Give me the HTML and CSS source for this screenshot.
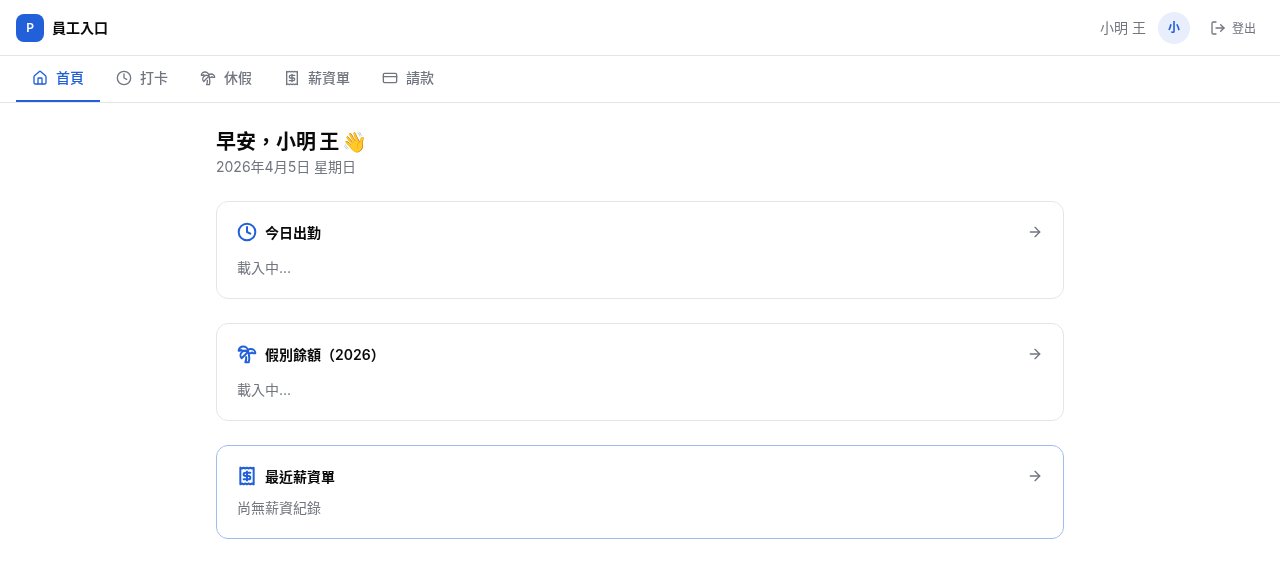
FILE: index.html
```html
<!DOCTYPE html>
<html lang="zh-Hant">

<head>
	<meta charset="UTF-8">
	<meta name="viewport" content="width=device-width, initial-scale=1.0">
	<title>員工入口</title>
	<link rel="stylesheet" href="styles.css">
</head>

<body>
	<div class="page">
		<header class="topbar">
			<div class="brand">
				<div class="brand-logo">P</div>
				<span class="brand-name">員工入口</span>
			</div>
			<div class="user">
				<span class="user-name">小明 王</span>
				<div class="avatar">小</div>
				<button class="logout">
					<svg class="icon" viewBox="0 0 24 24"><path d="m16 17 5-5-5-5"/><path d="M21 12H9"/><path d="M9 21H5a2 2 0 0 1-2-2V5a2 2 0 0 1 2-2h4"/></svg>
					登出
				</button>
			</div>
		</header>

		<nav class="tabs">
			<a class="tab active">
				<svg class="icon" viewBox="0 0 24 24"><path d="M15 21v-8a1 1 0 0 0-1-1h-4a1 1 0 0 0-1 1v8"/><path d="M3 10a2 2 0 0 1 .709-1.528l7-5.999a2 2 0 0 1 2.582 0l7 5.999A2 2 0 0 1 21 10v9a2 2 0 0 1-2 2H5a2 2 0 0 1-2-2z"/></svg>
				首頁
			</a>
			<a class="tab">
				<svg class="icon" viewBox="0 0 24 24"><circle cx="12" cy="12" r="10"/><polyline points="12 6 12 12 16 14"/></svg>
				打卡
			</a>
			<a class="tab">
				<svg class="icon" viewBox="0 0 24 24"><path d="M13 8c0-2.76-2.46-5-5.5-5S2 5.24 2 8h2l1-1 1 1h4"/><path d="M13 7.14A5.82 5.82 0 0 1 16.5 6c3.04 0 5.5 2.24 5.5 5h-3l-1-1-1 1h-3"/><path d="M5.89 9.71c-2.15 2.15-2.3 5.47-.35 7.43l4.24-4.25.7-.7.71-.71 2.12-2.12c-1.95-1.96-5.27-1.8-7.42.35"/><path d="M11 15.5c.5 2.5-.17 4.5-1 6.5h4c2-5.5-.5-12-1-14"/></svg>
				休假
			</a>
			<a class="tab">
				<svg class="icon" viewBox="0 0 24 24"><path d="M4 2v20l2-1 2 1 2-1 2 1 2-1 2 1 2-1 2 1V2l-2 1-2-1-2 1-2-1-2 1-2-1-2 1Z"/><path d="M16 8h-6a2 2 0 1 0 0 4h4a2 2 0 1 1 0 4H8"/><path d="M12 17.5v-11"/></svg>
				薪資單
			</a>
			<a class="tab">
				<svg class="icon" viewBox="0 0 24 24"><rect width="20" height="14" x="2" y="5" rx="2"/><line x1="2" x2="22" y1="10" y2="10"/></svg>
				請款
			</a>
		</nav>

		<main class="content">
			<div class="greeting">
				<h1>早安，小明 王 👋</h1>
				<p>2026年4月5日 星期日</p>
			</div>

			<section class="card">
				<div class="card-head">
					<svg class="icon card-icon" viewBox="0 0 24 24"><circle cx="12" cy="12" r="10"/><polyline points="12 6 12 12 16 14"/></svg>
					<h2>今日出勤</h2>
					<svg class="icon arrow" viewBox="0 0 24 24"><path d="M5 12h14"/><path d="m12 5 7 7-7 7"/></svg>
				</div>
				<p class="card-text">載入中...</p>
			</section>

			<section class="card">
				<div class="card-head">
					<svg class="icon card-icon" viewBox="0 0 24 24"><path d="M13 8c0-2.76-2.46-5-5.5-5S2 5.24 2 8h2l1-1 1 1h4"/><path d="M13 7.14A5.82 5.82 0 0 1 16.5 6c3.04 0 5.5 2.24 5.5 5h-3l-1-1-1 1h-3"/><path d="M5.89 9.71c-2.15 2.15-2.3 5.47-.35 7.43l4.24-4.25.7-.7.71-.71 2.12-2.12c-1.95-1.96-5.27-1.8-7.42.35"/><path d="M11 15.5c.5 2.5-.17 4.5-1 6.5h4c2-5.5-.5-12-1-14"/></svg>
					<h2>假別餘額（2026）</h2>
					<svg class="icon arrow" viewBox="0 0 24 24"><path d="M5 12h14"/><path d="m12 5 7 7-7 7"/></svg>
				</div>
				<p class="card-text">載入中...</p>
			</section>

			<section class="card card-last">
				<div class="card-head">
					<svg class="icon card-icon" viewBox="0 0 24 24"><path d="M4 2v20l2-1 2 1 2-1 2 1 2-1 2 1 2-1 2 1V2l-2 1-2-1-2 1-2-1-2 1-2-1-2 1Z"/><path d="M16 8h-6a2 2 0 1 0 0 4h4a2 2 0 1 1 0 4H8"/><path d="M12 17.5v-11"/></svg>
					<h2>最近薪資單</h2>
					<svg class="icon arrow" viewBox="0 0 24 24"><path d="M5 12h14"/><path d="m12 5 7 7-7 7"/></svg>
				</div>
				<p class="card-text">尚無薪資紀錄</p>
			</section>
		</main>
	</div>
</body>

</html>
```

FILE: styles.css
```css
body {
	font-family: Inter, "Noto Sans CJK TC", sans-serif;
	background-color: #fff;
	color: #0a0a0a;
	margin: 0;
	padding: 0;
}

/* own layer, so the text is drawn with grey antialiasing */
.page {
	will-change: transform;
}

.icon {
	width: 16px;
	height: 16px;
	fill: none;
	stroke: currentColor;
	stroke-width: 2;
	stroke-linecap: round;
	stroke-linejoin: round;
	flex-shrink: 0;
}

.topbar {
	height: 55px;
	display: flex;
	align-items: center;
	justify-content: space-between;
	padding: 0 16px;
	border-bottom: 1px solid #e5e5e5;
}

.brand {
	display: flex;
	align-items: center;
	gap: 8px;
}

.brand-logo {
	width: 28px;
	height: 28px;
	border-radius: 8px;
	background-color: #2160d8;
	color: #fff;
	font-size: 12px;
	font-weight: 600;
	display: flex;
	align-items: center;
	justify-content: center;
}

.brand-name {
	font-size: 14px;
	line-height: 20px;
	font-weight: 600;
}

.user {
	display: flex;
	align-items: center;
	gap: 12px;
}

.user-name {
	font-size: 14px;
	line-height: 20px;
	color: #71757e;
}

.avatar {
	width: 32px;
	height: 32px;
	border-radius: 50%;
	background-color: #e8eefb;
	color: #2160d8;
	font-size: 12px;
	line-height: 16px;
	font-weight: 600;
	display: flex;
	align-items: center;
	justify-content: center;
}

.logout {
	display: flex;
	align-items: center;
	gap: 6px;
	height: 32px;
	padding: 0 8px;
	border: none;
	background: transparent;
	color: #71757e;
	font-family: inherit;
	font-size: 12px;
}

.tabs {
	display: flex;
	padding: 0 16px;
	border-bottom: 1px solid #e5e5e5;
}

.tab {
	display: flex;
	align-items: center;
	gap: 8px;
	height: 44px;
	padding: 0 16px;
	font-size: 14px;
	line-height: 20px;
	font-weight: 500;
	color: #71757e;
	border-bottom: 2px solid transparent;
}

.tab.active {
	color: #2160d8;
	border-bottom-color: #2160d8;
}

.content {
	width: 848px;
	margin: 0 auto;
	padding-top: 24px;
}

.greeting h1 {
	font-size: 20px;
	line-height: 28px;
	font-weight: 700;
	word-spacing: -1.5px;
	padding-top: 1px;
	margin: 0;
}

.greeting p {
	font-size: 14px;
	line-height: 20px;
	color: #71757e;
	margin: 1px 0 0;
}

.card {
	border: 1px solid #e5e5e5;
	border-radius: 12px;
	padding: 20px;
	margin-top: 24px;
	height: 56px;
}

.card-last {
	border-color: #a3bcee;
	height: 52px;
}

.card-head {
	display: flex;
	align-items: center;
	gap: 8px;
	height: 20px;
}

.card-head h2 {
	font-size: 14px;
	font-weight: 600;
	margin: 0;
	flex: 1;
}

.card-icon {
	width: 20px;
	height: 20px;
	color: #2160d8;
	stroke-width: 2.4;
}

.arrow {
	color: #71757e;
}

.card-text {
	font-size: 14px;
	line-height: 20px;
	color: #71757e;
	margin: 16px 0 0;
}

.card-last .card-text {
	margin-top: 12px;
}
```
